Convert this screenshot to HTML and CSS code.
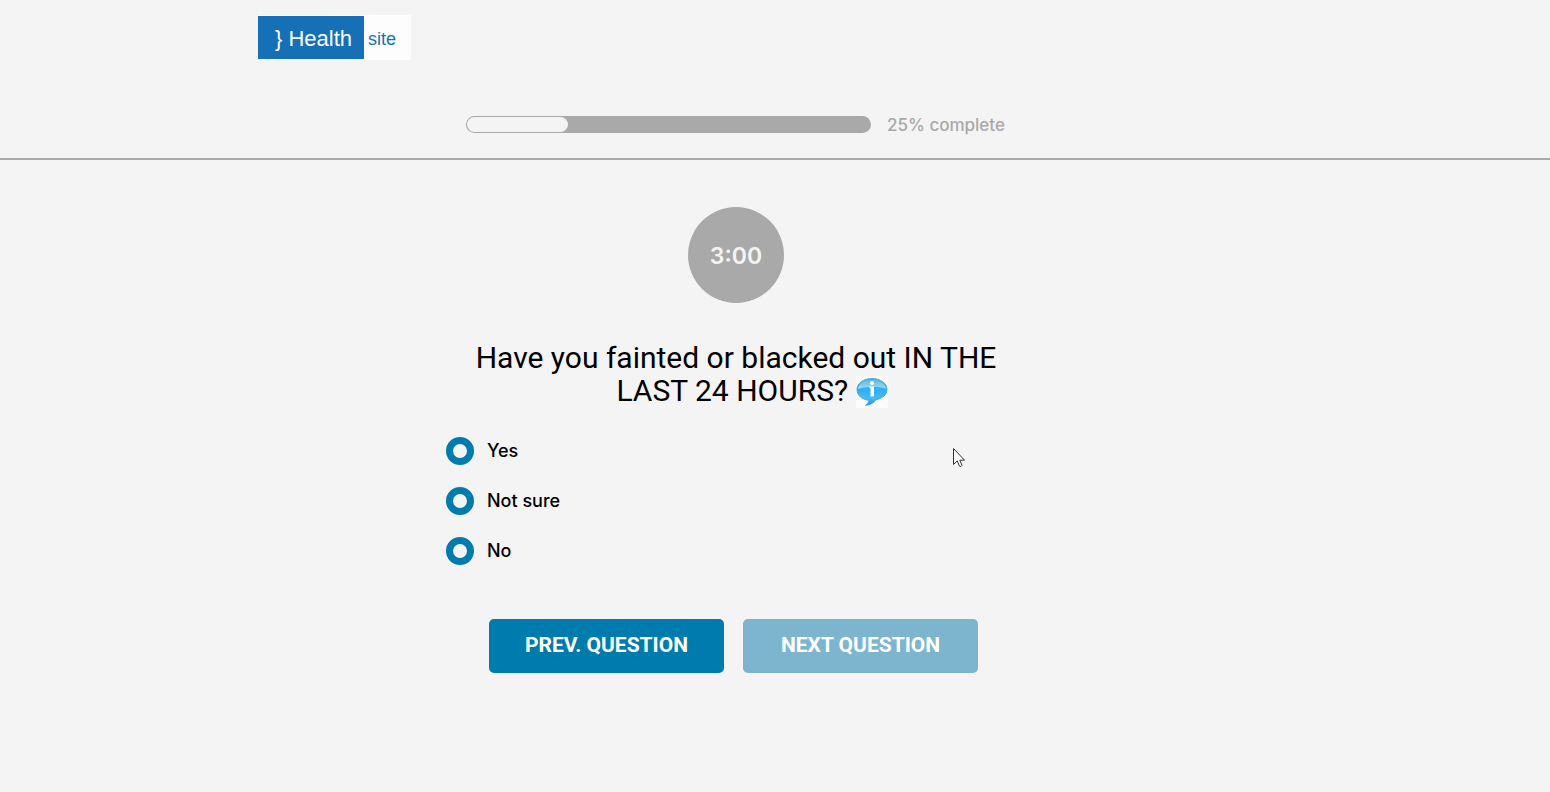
FILE: index.html
```html
<!DOCTYPE html>
<html lang="en">
<head>
<meta charset="utf-8">
<meta name="viewport" content="width=device-width, initial-scale=1">
<title>Health site</title>
<link rel="stylesheet" href="styles.css">
</head>
<body>
<header class="header">
  <div class="container">
    <a class="logo" href="#"><span class="logo-main">} Health</span><span class="logo-sub">site</span></a>
    <div class="progress">
      <div class="progress-track" role="progressbar" aria-valuemin="0" aria-valuemax="100" aria-valuenow="25" aria-labelledby="progress-label">
        <div class="progress-fill" style="width: 25%"></div>
      </div>
      <span class="progress-label" id="progress-label">25% complete</span>
    </div>
  </div>
</header>
<main class="container">
  <form class="question">
    <div class="timer">3:00</div>
    <h1 class="title" id="question-title">Have you fainted or blacked out IN THE LAST 24 HOURS?
      <svg class="info" viewBox="0 0 32 32" role="img" aria-label="More information">
        <defs>
          <linearGradient id="bubble" x1="0" y1="0" x2="0" y2="1">
            <stop offset="0" stop-color="#4fb4e0"/>
            <stop offset=".45" stop-color="#2fb0f4"/>
            <stop offset=".75" stop-color="#45bcfa"/>
            <stop offset="1" stop-color="#1e90e6"/>
          </linearGradient>
          <linearGradient id="gloss" x1="0" y1="0" x2="0" y2="1">
            <stop offset="0" stop-color="#5bb6dc"/>
            <stop offset="1" stop-color="#a6dcf5"/>
          </linearGradient>
        </defs>
        <rect width="32" height="32" fill="#fcfcfc"/>
        <path d="M16 2.500C7.500 2.500 1 7.500 1 13.500c0 6 5 10 12 10.800-.3 2-1.500 3.800-3.500 5 5-.3 8.500-2.500 10.200-5.500C26.500 22.500 31 18.500 31 13.500c0-6-6.500-11-15-11z" fill="url(#bubble)" stroke="#4aa6d6"/>
        <path d="M16 3.500C8.500 3.500 2.500 7.500 2 13c8-2.500 18.500-3 28-.5C29 7.500 23.500 3.500 16 3.500z" fill="url(#gloss)"/>
        <circle cx="16" cy="7" r="2" fill="#fff"/>
        <path d="M13.500 10.500h4.500v10h-3.500v-8.500h-1z" fill="#fff"/>
      </svg>
    </h1>
    <div class="options" role="radiogroup" aria-labelledby="question-title">
      <label class="option"><input class="radio" type="radio" name="answer" value="yes">Yes</label>
      <label class="option"><input class="radio" type="radio" name="answer" value="not-sure">Not sure</label>
      <label class="option"><input class="radio" type="radio" name="answer" value="no">No</label>
    </div>
    <div class="actions">
      <button class="button" type="button">PREV. QUESTION</button>
      <button class="button" type="submit" disabled>NEXT QUESTION</button>
    </div>
    <svg class="cursor" viewBox="0 0 12 20" aria-hidden="true">
      <path d="M.5.500v16l3.700-3.600 2.400 5.400q1.500.8 2.400-.9L6.800 12.200h4.700z" fill="#fff" stroke="#30303a"/>
    </svg>
  </form>
</main>
</body>
</html>
```

FILE: styles.css
```css
* {
  box-sizing: border-box;
}

body {
  margin: 0;
  background: #f4f4f4;
  color: #000;
  font-family: Inter, "Liberation Sans", sans-serif;
}

.container {
  max-width: 1034px;
  margin: 0 auto;
}

.header {
  padding: 15px 0 25px;
  border-bottom: 2px solid #a9a9a9;
}

.logo {
  display: inline-flex;
  vertical-align: top;
  width: 153px;
  height: 45px;
  padding: 1px 0;
  background: #fdfdfd;
  color: #1870b8;
  font-family: "Liberation Sans", Arial, sans-serif;
  text-decoration: none;
}

.logo-main {
  width: 106px;
  height: 43px;
  padding-left: 17px;
  background: #1670b8;
  color: #fff;
  font-size: 22px;
  line-height: 45px;
  white-space: nowrap;
}

.logo-sub {
  padding-left: 4px;
  font-size: 18px;
  line-height: 47px;
}

.progress {
  display: flex;
  align-items: center;
  gap: 16px;
  margin: 56px 0 0 208px;
}

.progress-track {
  flex: 0 1 405px;
  height: 17px;
  padding: 1px;
  border-radius: 9px;
  background: #a9a9a9;
}

.progress-fill {
  height: 100%;
  border-radius: 8px;
  background: #f4f4f4;
}

.progress-label {
  padding-top: 2px;
  color: #a9a9a9;
  font-size: 17px;
  font-weight: 500;
  line-height: 15px;
}

.question {
  position: relative;
  max-width: 580px;
  margin-left: 188px;
  padding-top: 47px;
}

.timer {
  width: 96px;
  height: 96px;
  margin: 0 auto;
  border-radius: 50%;
  background: #a9a9a9;
  color: #f4f4f4;
  font-size: 23px;
  font-weight: 600;
  line-height: 98px;
  text-align: center;
}

.title {
  margin: 38px 0 0;
  padding: 0 28px;
  font-family: Roboto, sans-serif;
  font-size: 30px;
  font-weight: 400;
  line-height: 33px;
  text-align: center;
}

/* The icon hangs after the last word, so the words alone are centred. */
.info {
  width: 32px;
  height: 32px;
  margin-right: -32px;
  vertical-align: -7px;
}

.options {
  display: grid;
  gap: 22px;
  margin-top: 29px;
}

.option {
  display: flex;
  align-items: center;
  gap: 13px;
  font-size: 18px;
  font-weight: 500;
  line-height: 28px;
}

.radio {
  appearance: none;
  width: 28px;
  height: 28px;
  margin: 0;
  border: 7px solid #007bad;
  border-radius: 50%;
}

.radio:checked {
  background: #007bad;
}

.actions {
  display: flex;
  gap: 19px;
  margin: 54px 0 0 43px;
}

.button {
  width: 235px;
  height: 54px;
  padding: 0 0 2px;
  border: 0;
  border-radius: 5px;
  background: #007bad;
  color: #fff;
  font-family: Roboto, sans-serif;
  font-size: 21px;
  font-weight: 700;
}

.button:disabled {
  background: #7db5cf;
}

.cursor {
  position: absolute;
  top: 288px;
  left: 507px;
  width: 12px;
  height: 20px;
}
```
